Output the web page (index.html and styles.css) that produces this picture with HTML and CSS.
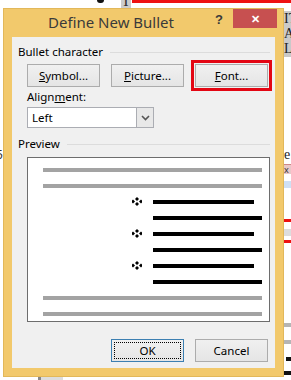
FILE: index.html
```html
<!DOCTYPE html>
<html lang="en">
<head>
    <meta charset="UTF-8">
    <meta name="viewport" content="width=device-width, initial-scale=1.0">
    <title>Define New Bullet</title>
    <link rel="stylesheet" href="styles.css">
</head>
<body>
    <div class="page">
        <!-- pedaços do documento atrás do diálogo -->
        <span class="bg-blob"></span>
        <span class="bg-cursor">I</span>
        <span class="bg-redline"></span>
        <div class="bg-side">IT<br>AI<br>LA</div>
        <span class="bg-e">e</span>
        <span class="bg-xbox">x</span>
        <span class="bg-blue"></span>
        <span class="bg-red bg-red1"></span>
        <span class="bg-gray bg-gray1"></span>
        <span class="bg-red bg-red2"></span>
        <span class="bg-gray bg-gray2"></span>
        <span class="bg-gray bg-gray3"></span>
        <span class="bg-black bg-black1"></span>
        <span class="bg-black bg-black2"></span>
        <span class="bg-five">5</span>
        <span class="bg-bottom"></span>

        <div class="dialog">
            <div class="titlebar">
                <span class="title">Define New Bullet</span>
                <span class="help">?</span>
                <span class="close">&#x2715;</span>
            </div>

            <div class="client">
                <div class="group-head">
                    <span>Bullet character</span>
                    <span class="rule"></span>
                </div>

                <div class="btn-row">
                    <button class="btn"><u>S</u>ymbol...</button>
                    <button class="btn"><u>P</u>icture...</button>
                    <button class="btn btn-marked"><u>F</u>ont...</button>
                </div>

                <label class="field-label">Align<u>m</u>ent:</label>
                <div class="select">
                    <span class="select-value">Left</span>
                    <span class="select-arrow">
                        <svg width="9" height="6" viewBox="0 0 9 6"><path d="M1 1 L4.5 4.5 L8 1" fill="none" stroke="#555" stroke-width="1.6"/></svg>
                    </span>
                </div>

                <div class="group-head preview-head">
                    <span>Preview</span>
                    <span class="rule"></span>
                </div>

                <div class="preview">
                    <div class="pline gray"></div>
                    <div class="pline gray"></div>
                    <div class="prow">
                        <span class="slot"><svg class="bullet" width="10" height="9" viewBox="0 0 10 9"><path d="M5 0 L7 2 L5 4 L3 2 Z M5 5 L7 7 L5 9 L3 7 Z M1 2.5 L3 4.5 L1 6.5 L-1 4.5 Z M9 2.5 L11 4.5 L9 6.5 L7 4.5 Z" fill="#000"/></svg></span>
                        <span class="bar short"></span>
                    </div>
                    <div class="prow"><span class="slot"></span><span class="bar"></span></div>
                    <div class="prow">
                        <span class="slot"><svg class="bullet" width="10" height="9" viewBox="0 0 10 9"><path d="M5 0 L7 2 L5 4 L3 2 Z M5 5 L7 7 L5 9 L3 7 Z M1 2.5 L3 4.5 L1 6.5 L-1 4.5 Z M9 2.5 L11 4.5 L9 6.5 L7 4.5 Z" fill="#000"/></svg></span>
                        <span class="bar short"></span>
                    </div>
                    <div class="prow"><span class="slot"></span><span class="bar"></span></div>
                    <div class="prow">
                        <span class="slot"><svg class="bullet" width="10" height="9" viewBox="0 0 10 9"><path d="M5 0 L7 2 L5 4 L3 2 Z M5 5 L7 7 L5 9 L3 7 Z M1 2.5 L3 4.5 L1 6.5 L-1 4.5 Z M9 2.5 L11 4.5 L9 6.5 L7 4.5 Z" fill="#000"/></svg></span>
                        <span class="bar short"></span>
                    </div>
                    <div class="prow"><span class="slot"></span><span class="bar"></span></div>
                    <div class="pline gray"></div>
                    <div class="pline gray"></div>
                </div>

                <div class="footer">
                    <button class="btn btn-default"><span class="focus">OK</span></button>
                    <button class="btn">Cancel</button>
                </div>
            </div>
        </div>
    </div>
</body>
</html>
```

FILE: styles.css
```css
body {
    margin: 0;
    padding: 0;
    background-color: #fff;
    font-family: "Noto Sans", "Open Sans", sans-serif;
}

.page {
    position: relative;
    width: 291px;
    height: 380px;
    overflow: hidden;
    background: #fff;
}

/* fundo */
.bg-blob {
    position: absolute;
    left: 97px;
    top: 0;
    width: 7px;
    height: 3px;
    background: #111;
    border-radius: 0 0 4px 4px;
}

.bg-cursor {
    position: absolute;
    left: 121px;
    top: -7px;
    width: 10px;
    height: 16px;
    background: #ccc;
    font-family: "Liberation Serif", serif;
    font-size: 16px;
    line-height: 16px;
    text-align: center;
    color: #333;
}

.bg-redline {
    position: absolute;
    left: 132px;
    top: 0;
    right: 0;
    height: 3px;
    background: #e11;
}

.bg-side {
    position: absolute;
    left: 284px;
    top: 11px;
    width: 20px;
    height: 46px;
    background: #c9c9c9;
    font-family: "Liberation Serif", serif;
    font-size: 14px;
    line-height: 15px;
    color: #222;
}

.bg-e {
    position: absolute;
    left: 284px;
    top: 148px;
    font-family: "Liberation Serif", serif;
    font-size: 14px;
    line-height: 14px;
    color: #222;
}

.bg-xbox {
    position: absolute;
    left: 284px;
    top: 164px;
    width: 10px;
    height: 9px;
    background: #e8c8c8;
    border-top: 1px solid #c88;
    font-size: 9px;
    line-height: 9px;
    color: #333;
}

.bg-blue {
    position: absolute;
    left: 284px;
    top: 181px;
    width: 8px;
    height: 7px;
    background: #cfe0f4;
}

.bg-red {
    position: absolute;
    left: 284px;
    width: 8px;
    height: 3px;
    background: #e11;
}

.bg-red1 { top: 219px; }
.bg-red2 { top: 240px; }

.bg-gray {
    position: absolute;
    left: 284px;
    width: 8px;
    height: 4px;
    background: #b5b5b5;
}

.bg-gray1 { top: 229px; height: 7px; background: #ddd; }
.bg-gray2 { top: 323px; }
.bg-gray3 { top: 340px; }

.bg-black {
    position: absolute;
    left: 284px;
    width: 8px;
    height: 4px;
    background: #111;
}

.bg-black1 { top: 357px; left: 286px; }
.bg-black2 { top: 371px; }

.bg-five {
    position: absolute;
    left: -4px;
    top: 148px;
    font-size: 12px;
    line-height: 14px;
    color: #333;
}

.bg-bottom {
    position: absolute;
    left: 38px;
    top: 376px;
    width: 22px;
    height: 6px;
    background: #ddd;
    border-left: 3px solid #888;
}

/* diálogo */
.dialog {
    position: absolute;
    left: 4px;
    top: 9px;
    width: 279px;
    height: 367px;
    background: #f2c96c;
    box-shadow: 0 0 0 1px #e2b85a;
    display: flex;
    flex-direction: column;
}

.titlebar {
    height: 28px;
    display: flex;
    align-items: flex-start;
    position: relative;
}

.title {
    margin-left: 44px;
    margin-top: 3px;
    font-size: 15px;
    line-height: 20px;
    color: #3a3a3a;
}

.help {
    position: absolute;
    left: 211px;
    top: 3px;
    font-family: "Liberation Sans", sans-serif;
    font-weight: bold;
    font-size: 13px;
    color: #3a3a3a;
}

.close {
    position: absolute;
    left: 229px;
    top: 0;
    width: 44px;
    height: 19px;
    background: #c75050;
    color: #fff;
    font-size: 11px;
    font-weight: bold;
    line-height: 19px;
    text-align: center;
}

.client {
    margin: 0 8px 8px 8px;
    flex: 1;
    background: #f0f0f0;
    display: flex;
    flex-direction: column;
    font-size: 11.5px;
    color: #000;
}

.group-head {
    display: flex;
    align-items: center;
    gap: 7px;
    height: 14px;
    margin-top: 8px;
    padding-left: 6px;
    margin-right: 5px;
    line-height: 14px;
}

.rule {
    flex: 1;
    height: 1px;
    background: #dcdcdc;
}

.btn-row {
    display: flex;
    gap: 11px;
    margin-top: 5px;
    padding-left: 15px;
}

.btn {
    width: 73px;
    height: 23px;
    padding: 0;
    font-family: "Noto Sans", "Open Sans", sans-serif;
    font-size: 11.5px;
    color: #000;
    background: linear-gradient(#f0f0f0, #e5e5e5);
    border: 1px solid #acacac;
    border-radius: 0;
}

.btn-marked {
    outline: 3px solid #e30613;
    outline-offset: 1px;
}

.field-label {
    display: block;
    margin-top: 3px;
    padding-left: 15px;
    height: 14px;
    line-height: 14px;
}

.select {
    display: flex;
    margin-top: 3px;
    margin-left: 15px;
    width: 127px;
    height: 21px;
    box-sizing: border-box;
    background: #fff;
    border: 1px solid #abadb3;
}

.select-value {
    flex: 1;
    padding-left: 4px;
    line-height: 19px;
}

.select-arrow {
    width: 16px;
    background: #e8e8e8;
    border-left: 1px solid #abadb3;
    display: flex;
    align-items: center;
    justify-content: center;
}

.preview-head {
    margin-top: 9px;
}

.preview {
    margin-top: 6px;
    margin-left: 15px;
    width: 243px;
    height: 165px;
    box-sizing: border-box;
    background: #fff;
    border: 1px solid #6d6d6d;
    padding: 10px 0 0 15px;
    display: flex;
    flex-direction: column;
    gap: 12px;
}

.pline {
    width: 219px;
    height: 4px;
    flex: none;
}

.gray {
    background: #a3a3a3;
}

.prow {
    display: flex;
    align-items: center;
    height: 4px;
    flex: none;
}

.slot {
    width: 99px;
    flex: none;
    display: flex;
    justify-content: flex-end;
    padding-right: 11px;
}

.bullet {
    margin-top: -1px;
}

.bar {
    width: 109px;
    height: 4px;
    background: #000;
}

.bar.short {
    width: 101px;
}

.footer {
    display: flex;
    justify-content: flex-end;
    gap: 11px;
    margin-top: 17px;
    padding-right: 7px;
}

.btn-default {
    border-color: #3c7fb1;
    padding: 2px;
}

.focus {
    display: flex;
    align-items: center;
    justify-content: center;
    height: 100%;
    box-sizing: border-box;
    border: 1px dotted #000;
}
```
